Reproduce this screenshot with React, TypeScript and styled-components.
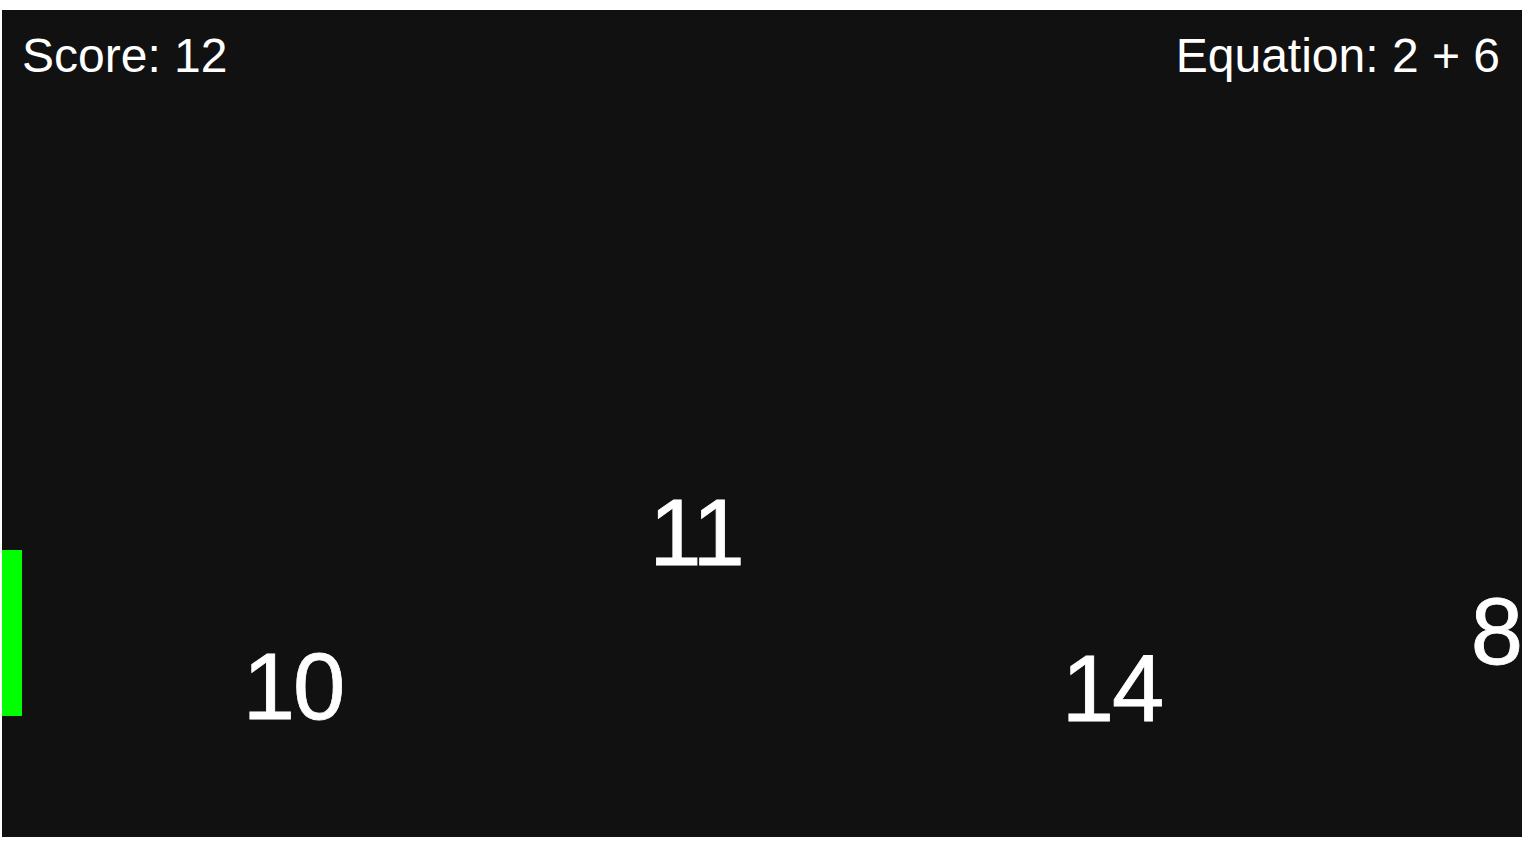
import styled, { createGlobalStyle } from "styled-components";

const GlobalStyle = createGlobalStyle`
  html, body {
    margin: 0;
    padding: 0;
    background: #ffffff;
  }
  #root {
    padding: 10px 6px 6px 2px;
  }
`;

const Board = styled.div`
  position: relative;
  width: 1520px;
  height: 827px;
  background: #111111;
  overflow: hidden;
  font-family: "Liberation Sans", Arial, sans-serif;
  font-kerning: normal;
  text-rendering: optimizeLegibility;
  color: #ffffff;
`;

const Hud = styled.div`
  display: flex;
  justify-content: space-between;
  align-items: flex-start;
  padding: 22px 22px 0 20px;
  font-size: 48px;
  line-height: 1;
`;

const Paddle = styled.div<{ $top: number; $height: number }>`
  position: absolute;
  left: 0;
  top: ${(p) => p.$top}px;
  width: 20px;
  height: ${(p) => p.$height}px;
  background: #00ff00;
`;

const Falling = styled.span`
  position: absolute;
  font-size: 94px;
  line-height: 1;
  letter-spacing: -2px;
  -webkit-text-stroke: 0.8px #ffffff;
  transform: translateX(-50%);
  white-space: nowrap;
`;

interface Drop {
  value: number;
  x: number;
  y: number;
}

const drops: Drop[] = [
  { value: 10, x: 291, y: 630 },
  { value: 11, x: 694, y: 476 },
  { value: 14, x: 1110, y: 632 },
  { value: 8, x: 1494, y: 575 },
];

const App = () => {
  return (
    <>
      <GlobalStyle />
      <Board>
        <Hud>
          <span>Score: 12</span>
          <span>Equation: 2 + 6</span>
        </Hud>
        <Paddle $top={540} $height={166} />
        {drops.map((d) => (
          <Falling key={d.value} style={{ left: d.x, top: d.y }}>
            {d.value}
          </Falling>
        ))}
      </Board>
    </>
  );
};

export default App;
